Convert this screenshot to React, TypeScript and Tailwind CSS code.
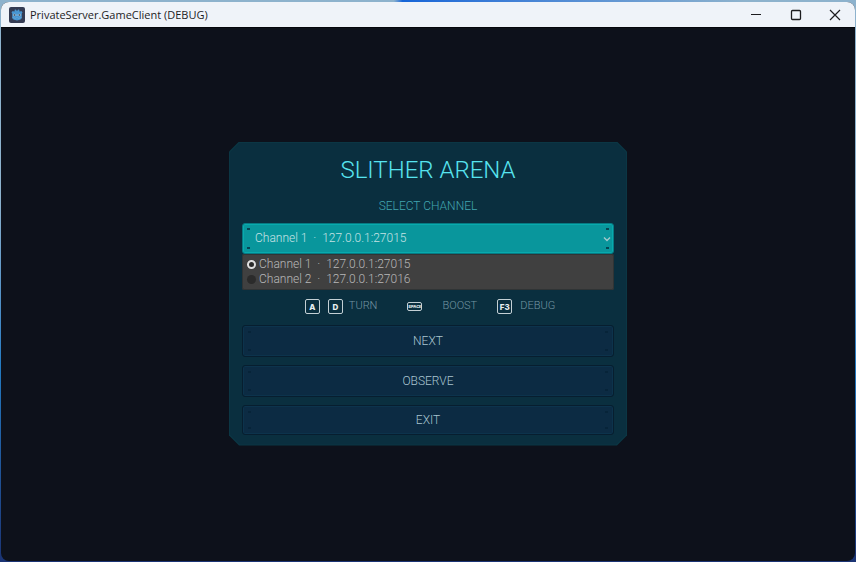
import { useState } from 'react';
import type { ReactNode } from 'react';

const channels = [
  { id: '1', label: 'Channel 1\u00a0 ·\u00a0 127.0.0.1:27015' },
  { id: '2', label: 'Channel 2\u00a0 ·\u00a0 127.0.0.1:27016' },
];

function AppLogo() {
  return (
    <svg viewBox="0 0 16 16" className="size-4 shrink-0" aria-hidden="true">
      <rect width="16" height="16" rx="2" fill="#343b53" />
      <path
        d="M2.5 5.2 3.8 4 5 4.6l.7-.3-.1-1.5L7 2.4l.6 1.3h.8L9 2.4l1.4.4-.1 1.5.7.3L12.2 4l1.3 1.2-.7 1.3v4.1c0 1.8-2 2.8-4.8 2.8s-4.8-1-4.8-2.8V6.5z"
        fill="#4795d1"
      />
      <path d="M3.3 10.4h1.8l.3 1h1.5l.3-.8h1.6l.3.8h1.5l.3-1h1.8" fill="none" stroke="#70abd8" strokeWidth=".5" />
      <circle cx="5.4" cy="8" r="1.3" fill="#b9cfdd" />
      <circle cx="10.6" cy="8" r="1.3" fill="#b9cfdd" />
      <circle cx="5.5" cy="8" r=".9" fill="#4b5a70" />
      <circle cx="10.5" cy="8" r=".9" fill="#4b5a70" />
      <path d="M8 7.4v1.4" stroke="#b9cfdd" strokeWidth=".8" />
    </svg>
  );
}

function TitleBar() {
  return (
    <header className="flex h-[25px] shrink-0 items-center bg-[#eff3f9] pl-2 text-[#1c1c1f]">
      <AppLogo />
      <h1 className="ml-[5px] flex-1 font-['Open_Sans','Noto_Sans',sans-serif] text-[11px] leading-4">
        PrivateServer.GameClient (DEBUG)
      </h1>
      <button type="button" aria-label="Minimize" className="flex h-full w-10 items-center justify-center">
        <svg viewBox="0 0 12 12" className="size-3" stroke="currentColor">
          <path d="M1 5.5h10" />
        </svg>
      </button>
      <button type="button" aria-label="Maximize" className="flex h-full w-[39px] items-center justify-center">
        <svg viewBox="0 0 12 12" className="size-3" fill="none" stroke="currentColor" strokeWidth="1.3">
          <rect x="1.5" y="1.5" width="9" height="9" rx="1" />
        </svg>
      </button>
      <button type="button" aria-label="Close" className="flex h-full w-10 items-center justify-center">
        <svg viewBox="0 0 12 12" className="size-3" stroke="currentColor" strokeWidth="1.2">
          <path d="m1 1 10 10M11 1 1 11" />
        </svg>
      </button>
    </header>
  );
}

// The four small screws in the corners of every plate
function Rivets() {
  return (
    <span className="pointer-events-none absolute inset-x-[5px] inset-y-[5px] flex flex-col justify-between" aria-hidden="true">
      <span className="flex justify-between">
        <i className="h-0.5 w-[3px] bg-[#062234]/70" />
        <i className="h-0.5 w-[3px] bg-[#062234]/70" />
      </span>
      <span className="flex justify-between">
        <i className="h-0.5 w-[3px] bg-[#062234]/70" />
        <i className="h-0.5 w-[3px] bg-[#062234]/70" />
      </span>
    </span>
  );
}

function MenuButton({ children }: { children: ReactNode }) {
  return (
    <button
      type="button"
      className="relative h-8 w-full rounded-[3px] border border-[#071e2f] bg-[#0c2b43] text-xs leading-4 text-[#a9c5d0] inset-ring inset-ring-[#0c334c] last:h-[30px]"
    >
      <Rivets />
      {children}
    </button>
  );
}

function Key({ children }: { children: ReactNode }) {
  return (
    <kbd className="flex size-[15px] items-center justify-center rounded-[2px] border border-[#c4d0d5] font-['Inter',sans-serif] text-[8px] leading-none font-extrabold text-[#e6eef0]">
      {children}
    </kbd>
  );
}

export default function App() {
  const [channel, setChannel] = useState('1');

  return (
    <div className="flex min-h-screen flex-col bg-linear-to-b from-[#8db2cd] from-35% via-[#237bc2] via-65% to-[#1b3474] px-px pb-px">
      <div className="h-0.5 bg-linear-to-r from-[#8db2cd] from-46% via-[#1565d8] via-47% to-[#8db2cd] to-87%" />
      <div className="flex flex-1 flex-col overflow-hidden rounded-lg bg-[#0d111b]">
        <TitleBar />
        <main className="flex flex-1 items-center justify-center border-t border-[#05070c] pb-0.5 font-['Roboto',sans-serif] font-light">
          <div className="w-full max-w-[398px] bg-[#0b3644] p-px [clip-path:polygon(10px_0,calc(100%-10px)_0,100%_10px,100%_calc(100%-10px),calc(100%-10px)_100%,10px_100%,0_calc(100%-10px),0_10px)]">
            <section className="bg-[#0a2f3f] px-3 pt-[11px] pb-2.5 [clip-path:polygon(10px_0,calc(100%-10px)_0,100%_10px,100%_calc(100%-10px),calc(100%-10px)_100%,10px_100%,0_calc(100%-10px),0_10px)]">
              <h2 className="text-center text-2xl leading-8 text-[#57e4ef]">SLITHER ARENA</h2>
              <label htmlFor="channel" className="mt-3 block text-center text-xs leading-4 text-[#42a6b0]">
                SELECT CHANNEL
              </label>

              <div className="relative mt-[9px]">
                <select
                  id="channel"
                  value={channel}
                  onChange={(e) => setChannel(e.target.value)}
                  className="block h-[31px] w-full appearance-none rounded-[3px] border border-[#077a83] bg-[#09969c] px-3 text-xs text-[#c6e2e4] inset-ring inset-ring-[#08aaad]"
                >
                  {channels.map((c) => (
                    <option key={c.id} value={c.id}>
                      {c.label}
                    </option>
                  ))}
                </select>
                <Rivets />
                <svg
                  viewBox="0 0 8 6"
                  className="pointer-events-none absolute top-[13px] right-[3px] h-1.5 w-2"
                  fill="none"
                  stroke="#a2c9cc"
                  strokeWidth="1.4"
                  aria-hidden="true"
                >
                  <path d="m1 1.5 3 3 3-3" />
                </svg>

                {/* Open list */}
                <fieldset className="absolute inset-x-0 top-full z-10 rounded-[2px] border border-[#303435] bg-[#404040] px-1 py-px">
                  {channels.map((c) => (
                    <label key={c.id} className="flex h-[15px] items-center gap-[3px] text-xs leading-[15px] text-[#b8b8b8] first:mt-px last:mb-px">
                      <input
                        type="radio"
                        name="channel"
                        value={c.id}
                        checked={channel === c.id}
                        onChange={() => setChannel(c.id)}
                        className="size-[9px] appearance-none rounded-full bg-[#2b2b2b] checked:border-2 checked:border-[#e0e0e0]"
                      />
                      {c.label}
                    </label>
                  ))}
                </fieldset>
              </div>

              <div className="mt-11 mb-[9px] flex h-[18px] items-center justify-center gap-5 pl-1 text-[11px] leading-4 text-[#7396a2]">
                <div className="flex items-center gap-2">
                  <Key>A</Key>
                  <Key>D</Key>
                  <span className="-mt-0.5 -ml-0.5">TURN</span>
                </div>
                <div className="ml-2.5 flex items-center gap-5">
                  <kbd className="flex h-[9px] w-[15px] items-center justify-center rounded-[2px] border border-[#c4d0d5] font-['Inter',sans-serif] text-[4px] leading-none font-extrabold text-[#e6eef0]">
                    SPACE
                  </kbd>
                  <span className="-mt-0.5">BOOST</span>
                </div>
                <div className="flex items-center gap-2">
                  <Key>F3</Key>
                  <span className="-mt-0.5">DEBUG</span>
                </div>
              </div>

              <div className="flex flex-col gap-2">
                <MenuButton>NEXT</MenuButton>
                <MenuButton>OBSERVE</MenuButton>
                <MenuButton>EXIT</MenuButton>
              </div>
            </section>
          </div>
        </main>
      </div>
    </div>
  );
}
